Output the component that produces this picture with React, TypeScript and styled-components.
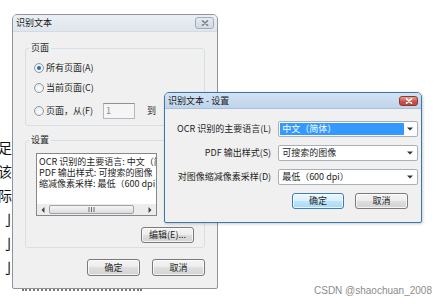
import React from 'react';
import styled, { createGlobalStyle } from 'styled-components';

const GlobalStyle = createGlobalStyle`
  html, body { margin: 0; padding: 0; background: #fff; }
  body { font-family: "Noto Sans CJK SC", "Noto Sans", sans-serif; color: #1e1e1e; }
  * { box-sizing: border-box; }
`;

const Desktop = styled.div`
  position: relative;
  width: 446px;
  height: 304px;
  overflow: hidden;
  background: #fff;
`;

// the document page behind the dialogs
const Doc = styled.div`
  position: absolute;
  left: -2px;
  top: 135px;
  font-size: 14px;
  line-height: 24px;
  color: #111;
  white-space: nowrap;
`;

const DocLine = styled.div<{ $indent?: number }>`
  padding-left: ${(p) => p.$indent ?? 0}px;
`;

const DotRow = styled.div`
  position: absolute;
  left: 22px;
  top: 289px;
  width: 120px;
  border-top: 2px dotted #777;
`;

const Window = styled.div<{ $x: number; $y: number; $w: number; $h: number; $active?: boolean }>`
  position: absolute;
  left: ${(p) => p.$x}px;
  top: ${(p) => p.$y}px;
  width: ${(p) => p.$w}px;
  height: ${(p) => p.$h}px;
  display: flex;
  flex-direction: column;
  border: 1px solid ${(p) => (p.$active ? '#3b78aa' : '#8d949c')};
  border-radius: 5px 5px 2px 2px;
  background: #f0f0f0;
  box-shadow: ${(p) => (p.$active ? '1px 1px 3px rgba(0,0,0,0.2)' : 'none')};
  overflow: hidden;
`;

const TitleBar = styled.div<{ $h: number; $active?: boolean }>`
  flex: none;
  height: ${(p) => p.$h}px;
  display: flex;
  align-items: center;
  justify-content: space-between;
  padding: 0 3px 0 3px;
  background: ${(p) =>
    p.$active ? 'linear-gradient(#d2e2f3, #bfd4eb)' : 'linear-gradient(#ebeff4, #dfe6ed)'};
  border-bottom: 1px solid ${(p) => (p.$active ? '#a9c0da' : '#d3dae2')};
  font-size: 9px;
  line-height: 12px;
  color: #1a1a1a;
`;

const CloseBtn = styled.div<{ $w: number; $h: number; $active?: boolean }>`
  width: ${(p) => p.$w}px;
  height: ${(p) => p.$h}px;
  display: flex;
  align-items: center;
  justify-content: center;
  border: 1px solid ${(p) => (p.$active ? '#8b3a30' : '#a3acb6')};
  border-radius: 3px;
  background: ${(p) =>
    p.$active ? 'linear-gradient(#e3a394, #c8554a 55%, #c0443a)' : 'linear-gradient(#e6ebf1, #d3dae3)'};
`;

const Body = styled.div<{ $pad: string }>`
  flex: 1;
  display: flex;
  flex-direction: column;
  padding: ${(p) => p.$pad};
  font-size: 9px;
  line-height: 12px;
`;

const Group = styled.fieldset<{ $mt: number }>`
  margin: ${(p) => p.$mt}px 0 0;
  padding: 0;
  min-width: 0;
  border: 1px solid #d5dfe5;
  border-radius: 3px;
`;

const Legend = styled.legend`
  margin-left: 3px;
  padding: 0 2px;
  font-size: 9px;
  line-height: 12px;
`;

const GroupBody = styled.div<{ $pad: string }>`
  display: flex;
  flex-direction: column;
  padding: ${(p) => p.$pad};
`;

const RadioRow = styled.div<{ $mt?: number }>`
  height: 16px;
  margin-top: ${(p) => p.$mt ?? 0}px;
  display: flex;
  align-items: center;
  gap: 2px;
`;

const Radio = styled.span<{ $checked?: boolean }>`
  flex: none;
  width: 10px;
  height: 10px;
  border-radius: 50%;
  border: 1px solid #8e99a4;
  background: radial-gradient(circle at 50% 60%, #ffffff, #dde2e8);
  display: inline-flex;
  align-items: center;
  justify-content: center;
  &::after {
    content: '';
    width: 4px;
    height: 4px;
    border-radius: 50%;
    background: ${(p) => (p.$checked ? '#2a6cb3' : 'transparent')};
  }
`;

const RadioLabel = styled.span<{ $w?: number }>`
  width: ${(p) => (p.$w ? `${p.$w}px` : 'auto')};
  white-space: nowrap;
`;

const PageInput = styled.div<{ $ml: number }>`
  flex: none;
  width: 32px;
  height: 16px;
  margin-left: ${(p) => p.$ml}px;
  border: 1px solid #b5b9be;
  border-top-color: #8e939a;
  background: #f5f5f5;
  color: #8a8a8a;
  padding-left: 2px;
  line-height: 14px;
`;

const ToLabel = styled.span`
  margin-left: 10px;
`;

const ListBox = styled.div`
  width: 121px;
  height: 63px;
  border: 1px solid #828790;
  background: #fff;
  display: flex;
  flex-direction: column;
`;

const ListLines = styled.div`
  flex: 1;
  padding: 2px 0 0 2px;
  font-size: 9px;
  line-height: 11px;
  white-space: nowrap;
  overflow: hidden;
`;

const HScroll = styled.div`
  flex: none;
  height: 11px;
  display: flex;
  align-items: stretch;
  background: #ececec;
`;

const ScrollArrow = styled.div`
  width: 12px;
  display: flex;
  align-items: center;
  justify-content: center;
`;

const Thumb = styled.div`
  width: 85px;
  margin: 1px 0;
  border: 1px solid #9da3aa;
  border-radius: 2px;
  background: linear-gradient(#f6f6f6, #dcdcdc);
  display: flex;
  align-items: center;
  justify-content: center;
`;

const Track = styled.div`
  flex: 1;
`;

const ButtonRow = styled.div<{ $mt: number; $gap: number; $pr?: number }>`
  display: flex;
  justify-content: flex-end;
  gap: ${(p) => p.$gap}px;
  margin-top: ${(p) => p.$mt}px;
  padding-right: ${(p) => p.$pr ?? 0}px;
`;

const Button = styled.div<{ $w: number; $h: number; $default?: boolean }>`
  width: ${(p) => p.$w}px;
  height: ${(p) => p.$h}px;
  display: flex;
  align-items: center;
  justify-content: center;
  border: 1px solid ${(p) => (p.$default ? '#3c7fb1' : '#7a7a7a')};
  border-radius: 3px;
  background: ${(p) =>
    p.$default
      ? 'linear-gradient(#eaf6fd 0%, #d9f0fc 50%, #bee6fd 50%, #a7d9f5 100%)'
      : 'linear-gradient(#f4f4f4 0%, #ececec 50%, #dfdfdf 50%, #d2d2d2 100%)'};
  box-shadow: inset 0 0 0 1px rgba(255, 255, 255, 0.75);
  font-size: 9px;
`;

const SettingsGrid = styled.div`
  display: grid;
  grid-template-columns: 1fr 140px;
  column-gap: 7px;
  row-gap: 8px;
  align-items: center;
`;

const FieldLabel = styled.span`
  text-align: right;
  white-space: nowrap;
`;

const Combo = styled.div`
  height: 16px;
  display: flex;
  padding: 1px;
  border: 1px solid #a7afb8;
  border-radius: 2px;
  background: #fff;
`;

const ComboValue = styled.div<{ $selected?: boolean }>`
  flex: 1;
  padding-left: 2px;
  line-height: 12px;
  white-space: nowrap;
  background: ${(p) => (p.$selected ? '#3399ff' : 'transparent')};
  color: ${(p) => (p.$selected ? '#fff' : '#1e1e1e')};
`;

const ComboArrow = styled.div`
  width: 12px;
  display: flex;
  align-items: center;
  justify-content: center;
`;

const Watermark = styled.div`
  position: absolute;
  right: 14px;
  bottom: 8px;
  font-family: "Liberation Sans", Arial, sans-serif;
  font-size: 10px;
  color: #8c8c8c;
`;

const Tri = ({ dir }: { dir: 'left' | 'right' | 'down' }) => {
  if (dir === 'down')
    return (
      <svg width="6" height="4" viewBox="0 0 6 4">
        <path d="M0 0.5 L6 0.5 L3 3.5 Z" fill="#333" />
      </svg>
    );
  return (
    <svg width="4" height="6" viewBox="0 0 4 6">
      <path d={dir === 'left' ? 'M3.5 0 L3.5 6 L0.5 3 Z' : 'M0.5 0 L0.5 6 L3.5 3 Z'} fill="#444" />
    </svg>
  );
};

const Grip = () => (
  <svg width="7" height="5" viewBox="0 0 7 5">
    <path d="M1 0 V5 M3.5 0 V5 M6 0 V5" stroke="#6d6d6d" strokeWidth="1" />
  </svg>
);

const CloseX = ({ color, w }: { color: string; w: number }) => (
  <svg width={w} height="6" viewBox="0 0 8 6">
    <path d="M1.5 0.8 L6.5 5.2 M6.5 0.8 L1.5 5.2" stroke={color} strokeWidth="1.6" strokeLinecap="round" />
  </svg>
);

export default function App() {
  return (
    <>
      <GlobalStyle />
      <Desktop>
        <Doc>
          <DocLine>足共</DocLine>
          <DocLine>该：</DocLine>
          <DocLine>际人</DocLine>
          <DocLine $indent={4}>亅</DocLine>
          <DocLine $indent={4}>亅</DocLine>
          <DocLine $indent={4}>亅</DocLine>
        </Doc>
        <DotRow />

        <Window $x={12} $y={14} $w={206} $h={275}>
          <TitleBar $h={17}>
            <span>识别文本</span>
            <CloseBtn $w={19} $h={12}>
              <CloseX color="#7d8793" w={8} />
            </CloseBtn>
          </TitleBar>
          <Body $pad="10px 12px 0 12px">
            <Group $mt={0}>
              <Legend>页面</Legend>
              <GroupBody $pad="6px 8px 6px">
                <RadioRow>
                  <Radio $checked />
                  <RadioLabel>所有页面(A)</RadioLabel>
                </RadioRow>
                <RadioRow $mt={4}>
                  <Radio />
                  <RadioLabel>当前页面(C)</RadioLabel>
                </RadioRow>
                <RadioRow $mt={7}>
                  <Radio />
                  <RadioLabel $w={58}>页面，从(F)</RadioLabel>
                  <PageInput $ml={0}>1</PageInput>
                  <ToLabel>到</ToLabel>
                  <PageInput $ml={6} />
                </RadioRow>
              </GroupBody>
            </Group>
            <Group $mt={8}>
              <Legend>设置</Legend>
              <GroupBody $pad="7px 10px 4px">
                <ListBox>
                  <ListLines>
                    <div>OCR 识别的主要语言: 中文（简体）</div>
                    <div>PDF 输出样式: 可搜索的图像</div>
                    <div>缩减像素采样: 最低（600 dpi）</div>
                  </ListLines>
                  <HScroll>
                    <ScrollArrow>
                      <Tri dir="left" />
                    </ScrollArrow>
                    <Thumb>
                      <Grip />
                    </Thumb>
                    <Track />
                    <ScrollArrow>
                      <Tri dir="right" />
                    </ScrollArrow>
                  </HScroll>
                </ListBox>
                <ButtonRow $mt={11} $gap={0}>
                  <Button $w={53} $h={16}>编辑(E)...</Button>
                </ButtonRow>
              </GroupBody>
            </Group>
            <ButtonRow $mt={11} $gap={12}>
              <Button $w={53} $h={17}>确定</Button>
              <Button $w={53} $h={17}>取消</Button>
            </ButtonRow>
          </Body>
        </Window>

        <Window $x={164} $y={92} $w={258} $h={131} $active>
          <TitleBar $h={16} $active>
            <span>识别文本 - 设置</span>
            <CloseBtn $w={19} $h={10} $active>
              <CloseX color="#fff" w={8} />
            </CloseBtn>
          </TitleBar>
          <Body $pad="12px 12px 0 12px">
            <SettingsGrid>
              <FieldLabel>OCR 识别的主要语言(L)</FieldLabel>
              <Combo>
                <ComboValue $selected>中文（简体）</ComboValue>
                <ComboArrow>
                  <Tri dir="down" />
                </ComboArrow>
              </Combo>
              <FieldLabel>PDF 输出样式(S)</FieldLabel>
              <Combo>
                <ComboValue>可搜索的图像</ComboValue>
                <ComboArrow>
                  <Tri dir="down" />
                </ComboArrow>
              </Combo>
              <FieldLabel>对图像缩减像素采样(D)</FieldLabel>
              <Combo>
                <ComboValue>最低（600 dpi）</ComboValue>
                <ComboArrow>
                  <Tri dir="down" />
                </ComboArrow>
              </Combo>
            </SettingsGrid>
            <ButtonRow $mt={8} $gap={11} $pr={1}>
              <Button $w={52} $h={16} $default>确定</Button>
              <Button $w={53} $h={16}>取消</Button>
            </ButtonRow>
          </Body>
        </Window>

        <Watermark>CSDN @shaochuan_2008</Watermark>
      </Desktop>
    </>
  );
}
